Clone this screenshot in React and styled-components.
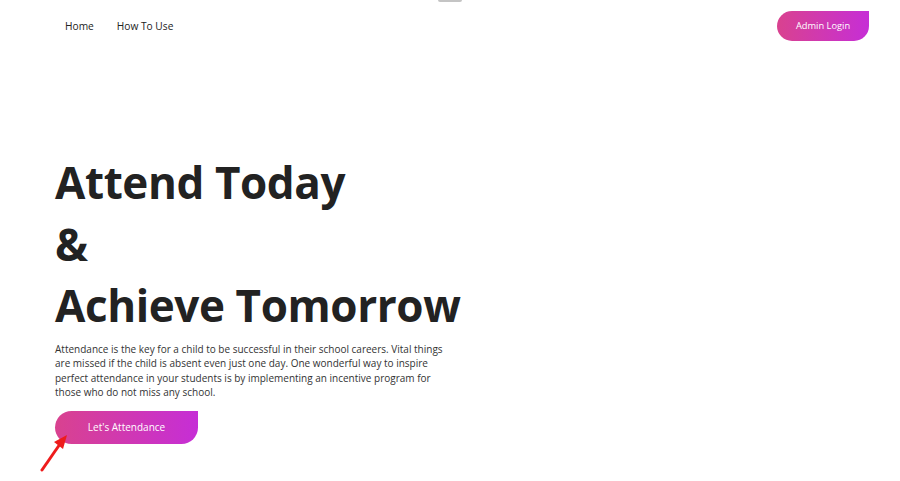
import React from "react";
import styled, { createGlobalStyle } from "styled-components";

const Global = createGlobalStyle`
  html, body {
    margin: 0;
    padding: 0;
    background: #ffffff;
  }
  body {
    font-family: "Open Sans", "Noto Sans", sans-serif;
    color: #222;
  }
`;

const Page = styled.div`
  position: relative;
  width: 900px;
  height: 481px;
  overflow: hidden;
  background: #fff;
`;

const TopTab = styled.div`
  position: absolute;
  top: 0;
  left: 438px;
  width: 24px;
  height: 2px;
  background: #c4c4c4;
  border-radius: 0 0 2px 2px;
`;

const Header = styled.header`
  display: flex;
  align-items: center;
  justify-content: space-between;
  height: 50px;
  padding: 0 31px 0 65px;
`;

const Nav = styled.nav`
  display: flex;
  gap: 23px;
  padding-top: 2px;
`;

const NavLink = styled.a`
  font-size: 10.2px;
  font-weight: 500;
  color: #222;
  text-decoration: none;
`;

const GradientButton = styled.button`
  border: none;
  cursor: pointer;
  color: #fff;
  font-family: "Open Sans", sans-serif;
  font-size: ${(p) => (p.$large ? "10px" : "9.3px")};
  width: ${(p) => (p.$large ? "143px" : "92px")};
  height: ${(p) => (p.$large ? "33px" : "30px")};
  border-radius: ${(p) => (p.$large ? "17px 0 17px 17px" : "15px 0 15px 15px")};
  background: linear-gradient(90deg, #d9428f 0%, #c62ed6 100%);
  padding: 0;
  ${(p) => !p.$large && "margin-top: 1px;"}
`;

const Hero = styled.section`
  padding: 102px 0 0 55px;
  width: 420px;
`;

const Heading = styled.h1`
  margin: 0;
  font-family: "Open Sans", sans-serif;
  font-size: 44px;
  font-weight: 700;
  line-height: 61.5px;
  color: #222;
  letter-spacing: -0.4px;
`;

const Text = styled.p`
  width: 400px;
  margin: 5.5px 0 11px;
  font-size: 10px;
  line-height: 14.4px;
  color: #333;
`;

const Arrow = styled.svg`
  position: absolute;
  left: 38px;
  top: 430px;
`;

export default function App() {
  return (
    <Page>
      <Global />
      <TopTab />
      <Header>
        <Nav>
          <NavLink href="#">Home</NavLink>
          <NavLink href="#">How To Use</NavLink>
        </Nav>
        <GradientButton>Admin Login</GradientButton>
      </Header>
      <Hero>
        <Heading>
          Attend Today
          <br />
          &amp;
          <br />
          Achieve Tomorrow
        </Heading>
        <Text>
          Attendance is the key for a child to be successful in their school
          careers. Vital things are missed if the child is absent even just one
          day. One wonderful way to inspire perfect attendance in your students
          is by implementing an incentive program for those who do not miss any
          school.
        </Text>
        <GradientButton $large>Let's Attendance</GradientButton>
      </Hero>
      <Arrow width="32" height="44" viewBox="0 0 32 44">
        <line x1="4" y1="40" x2="22" y2="14" stroke="#ee1c1c" strokeWidth="3" strokeLinecap="round" />
        <polygon points="29,5 16,12 25,19" fill="#ee1c1c" />
      </Arrow>
    </Page>
  );
}
